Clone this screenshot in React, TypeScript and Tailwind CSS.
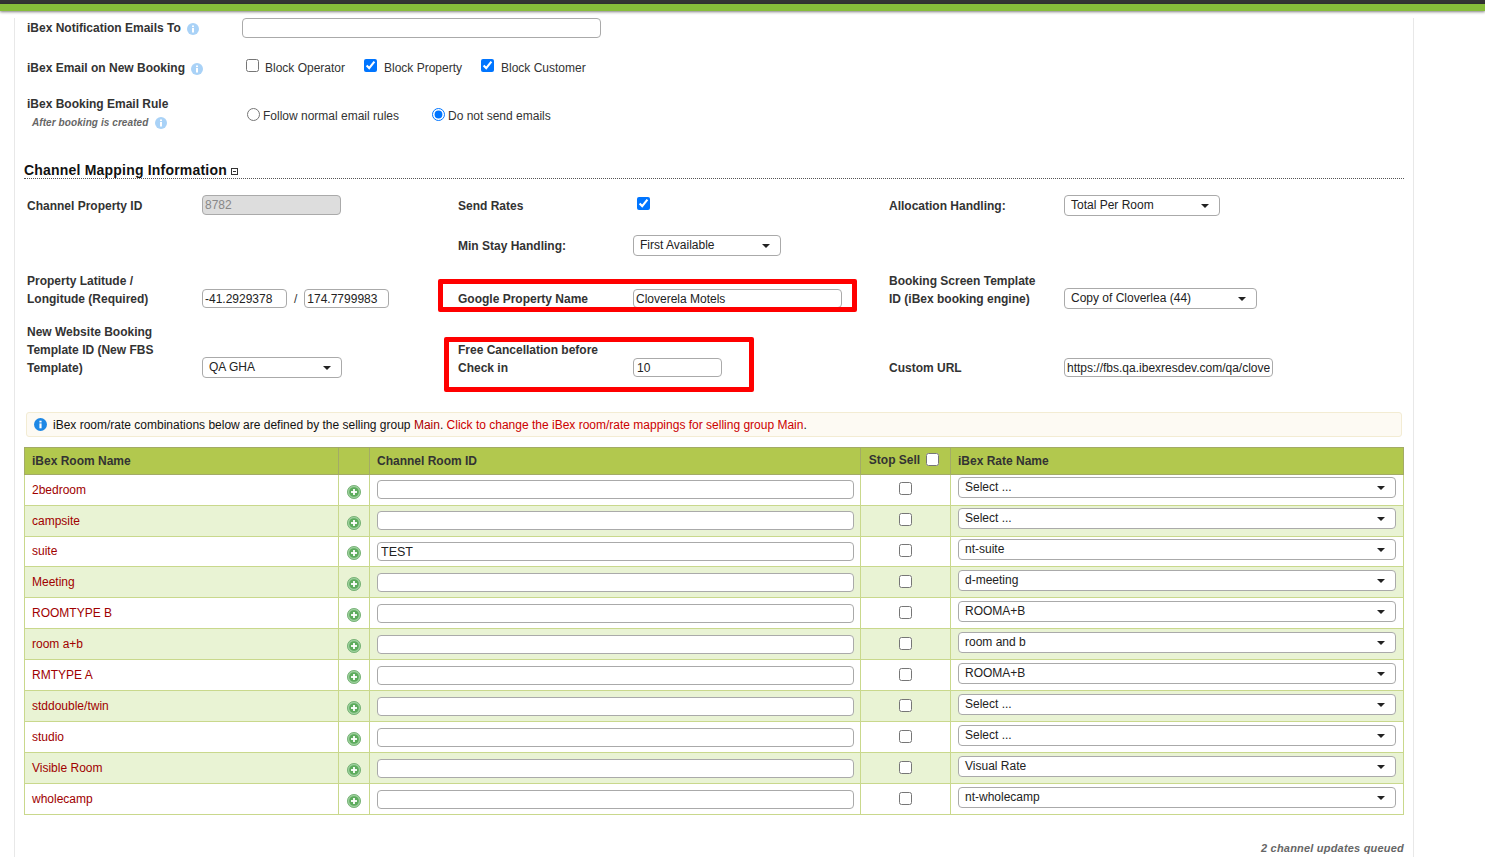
import React from "react";

const rooms = [
  { name: "2bedroom", id: "", rate: "Select ...", h: "h-[31px]" },
  { name: "campsite", id: "", rate: "Select ...", h: "h-[31px]" },
  { name: "suite", id: "TEST", rate: "nt-suite", h: "h-[30px]" },
  { name: "Meeting", id: "", rate: "d-meeting", h: "h-[31px]" },
  { name: "ROOMTYPE B", id: "", rate: "ROOMA+B", h: "h-[31px]" },
  { name: "room a+b", id: "", rate: "room and b", h: "h-[31px]" },
  { name: "RMTYPE A", id: "", rate: "ROOMA+B", h: "h-[31px]" },
  { name: "stddouble/twin", id: "", rate: "Select ...", h: "h-[31px]" },
  { name: "studio", id: "", rate: "Select ...", h: "h-[31px]" },
  { name: "Visible Room", id: "", rate: "Visual Rate", h: "h-[31px]" },
  { name: "wholecamp", id: "", rate: "nt-wholecamp", h: "h-[31px]" },
];

const InfoDot = ({ className = "" }: { className?: string }) => (
  <svg viewBox="0 0 12 12" className={`inline-block w-[12px] h-[12px] ${className}`}>
    <circle cx="6" cy="6" r="6" fill="#a9d2f7" />
    <rect x="5" y="5" width="2" height="4.5" fill="#fff" />
    <rect x="5" y="2.5" width="2" height="1.6" fill="#fff" />
  </svg>
);

const PlusIcon = () => (
  <svg viewBox="0 0 14 14" className="w-[14px] h-[14px] block">
    <circle cx="7" cy="7" r="6.6" fill="#9ccf9c" stroke="#6aa96a" strokeWidth="0.8" />
    <circle cx="7" cy="7" r="4.8" fill="#5cab5c" />
    <rect x="6.1" y="4" width="1.8" height="6" fill="#fff" />
    <rect x="4" y="6.1" width="6" height="1.8" fill="#fff" />
  </svg>
);

const Select = ({ value, className = "" }: { value: string; className?: string }) => (
  <div className={`flex items-center justify-between h-[21px] bg-white border border-[#aaa] rounded-[4px] pl-[6px] pr-[10px] text-[12px] text-[#222] ${className}`}>
    <span className="-mt-[2px]">{value}</span>
    <span className="w-0 h-0 border-x-[4px] border-x-transparent border-t-[4px] border-t-[#222]" />
  </div>
);

const TextBox = ({ value = "", className = "" }: { value?: string; className?: string }) => (
  <input
    readOnly
    value={value}
    className={`block h-[19px] bg-white border border-[#aaa] rounded-[4px] px-[3px] text-[12px] text-[#222] outline-none ${className}`}
  />
);

const Label = ({ children, className = "" }: { children: React.ReactNode; className?: string }) => (
  <div className={`font-bold text-[12px] leading-[18px] text-[#333] ${className}`}>{children}</div>
);

export default function App() {
  return (
    <div className="h-[857px] overflow-hidden bg-white text-[12px] text-[#333] font-['Liberation_Sans',Arial,sans-serif]">
      <div className="h-[4px] bg-[#333]" />
      <div className="h-[7px] bg-[#86bc3a] shadow-[0_1px_3px_rgba(0,0,0,0.5)] relative" />

      <div className="ml-[14px] w-[1400px] h-[846px] border-x border-[#e8e8e8] pl-[9px] pr-[9px]">
        {/* email settings */}
        <div className="flex items-center h-[20px] mt-[7px] pl-[3px]">
          <Label className="w-[215px]">
            iBex Notification Emails To <InfoDot className="ml-[3px] align-[-3px]" />
          </Label>
          <TextBox className="w-[359px] !h-[20px]" />
        </div>

        <div className="flex items-center h-[20px] mt-[20px] pl-[3px]">
          <Label className="w-[219px]">
            iBex Email on New Booking <InfoDot className="ml-[3px] align-[-3px]" />
          </Label>
          <label className="flex items-center w-[118px] -mt-[4px]">
            <input type="checkbox" readOnly className="m-0 relative -top-px" />
            <span className="ml-[6px] mt-[4px]">Block Operator</span>
          </label>
          <label className="flex items-center w-[117px] -mt-[4px]">
            <input type="checkbox" readOnly checked className="m-0 relative -top-px" />
            <span className="ml-[7px] mt-[4px]">Block Property</span>
          </label>
          <label className="flex items-center -mt-[4px]">
            <input type="checkbox" readOnly checked className="m-0 relative -top-px" />
            <span className="ml-[7px] mt-[4px]">Block Customer</span>
          </label>
        </div>

        <div className="flex items-center h-[36px] mt-[17px] pl-[3px]">
          <div className="w-[220px]">
            <Label>iBex Booking Email Rule</Label>
            <div className="pl-[5px] mt-px text-[10px] leading-[18px] font-bold italic text-[#666] tracking-[0.08px]">
              After booking is created <InfoDot className="ml-[4px] align-[-3px]" />
            </div>
          </div>
          <label className="flex items-center w-[185px] mt-[3px]">
            <input type="radio" name="rule" readOnly className="m-0" />
            <span className="ml-[3px] mt-[2px]">Follow normal email rules</span>
          </label>
          <label className="flex items-center mt-[3px]">
            <input type="radio" name="rule" readOnly checked className="m-0" />
            <span className="ml-[3px] mt-[2px]">Do not send emails</span>
          </label>
        </div>

        {/* channel mapping */}
        <div className="flex items-center mt-[31px] h-[17px] border-b border-dotted border-[#555] text-[14px] font-bold text-[#111] tracking-[0.2px]">
          Channel Mapping Information
          <span className="ml-[4px] mt-[2px] flex items-center justify-center w-[7px] h-[7px] border border-[#333]">
            <span className="w-[3px] h-px bg-[#333]" />
          </span>
        </div>

        <div className="grid grid-cols-[175px_256px_175px_256px_175px_1fr] grid-rows-[25px_21px_37px_55px] gap-y-[15px] pl-[3px] mt-[16px] [&>*]:min-w-0">
          <Label className="mt-[2px]">Channel Property ID</Label>
          <div><TextBox value="8782" className="w-[139px] !h-[20px] !px-[2px] !bg-[#ddd] !text-[#888]" /></div>
          <Label className="mt-[2px]">Send Rates</Label>
          <div><input type="checkbox" readOnly checked className="m-0 ml-[4px] mt-[2px] block" /></div>
          <Label className="mt-[2px]">Allocation Handling:</Label>
          <div><Select value="Total Per Room" className="w-[156px]" /></div>

          <div />
          <div />
          <Label className="self-center">Min Stay Handling:</Label>
          <div><Select value="First Available" className="w-[148px]" /></div>
          <div />
          <div />

          <Label className="self-end">Property Latitude /<br />Longitude (Required)</Label>
          <div className="flex items-end">
            <TextBox value="-41.2929378" className="w-[85px] !px-[2px]" />
            <span className="mx-[7px]">/</span>
            <TextBox value="174.7799983" className="w-[85px] !px-[2px]" />
          </div>
          <Label className="self-end">Google Property Name</Label>
          <div className="relative flex items-end">
            <TextBox value="Cloverela Motels" className="w-[209px] !px-[2px]" />
            <div className="absolute left-[-195px] top-[8px] w-[419px] h-[33px] border-[5px] border-[#f00] rounded-[2px] pointer-events-none" />
          </div>
          <Label className="self-end">Booking Screen Template<br />ID (iBex booking engine)</Label>
          <div className="flex items-end"><Select value="Copy of Cloverlea (44)" className="w-[193px] -mb-px" /></div>

          <Label className="self-end pb-px">New Website Booking<br />Template ID (New FBS<br />Template)</Label>
          <div className="flex items-end"><Select value="QA GHA" className="w-[140px]" /></div>
          <Label className="self-end pb-px">Free Cancellation before<br />Check in</Label>
          <div className="relative flex items-end">
            <TextBox value="10" className="w-[89px] mb-px" />
            <div className="absolute left-[-189px] top-[14px] w-[310px] h-[55px] border-[5px] border-[#f00] rounded-[2px] pointer-events-none" />
          </div>
          <Label className="self-end pb-px">Custom URL</Label>
          <div className="flex items-end">
            <TextBox value="https://fbs.qa.ibexresdev.com/qa/cloverlea" className="w-[209px] mb-px !px-[2px]" />
          </div>
        </div>

        {/* selling group notice */}
        <div className="flex items-center h-[25px] mt-[34px] ml-[2px] mr-[2px] bg-[#fdfaf3] border border-[#f3ecd3] rounded-[3px] pl-[7px]">
          <svg viewBox="0 0 12 12" className="w-[13px] h-[13px]">
            <circle cx="6" cy="6" r="6" fill="#1e88e5" />
            <rect x="5" y="5" width="2" height="4.5" fill="#fff" />
            <rect x="5" y="2.5" width="2" height="1.6" fill="#fff" />
          </svg>
          <span className="ml-[6px] text-[#111]">
            iBex room/rate combinations below are defined by the selling group{" "}
            <a className="text-[#a00]">Main</a>.{" "}
            <a className="text-[#c00]">Click to change the iBex room/rate mappings for selling group Main</a>.
          </span>
        </div>

        {/* room mapping table */}
        <table className="mt-[10px] ml-0 w-[1380px] table-fixed border-collapse">
          <colgroup>
            <col className="w-[314px]" />
            <col className="w-[31px]" />
            <col className="w-[491px]" />
            <col className="w-[90px]" />
            <col />
          </colgroup>
          <thead>
            <tr className="h-[27px] bg-[#b2c84e] text-[12px] text-[#333]">
              <th className="border border-[#a3ab66] pl-[7px] text-left font-bold">iBex Room Name</th>
              <th className="border border-[#a3ab66]" />
              <th className="border border-[#a3ab66] pl-[7px] text-left font-bold">Channel Room ID</th>
              <th className="border border-[#a3ab66] font-bold">
                <div className="flex items-center justify-center -mt-[3px] -ml-[3px]">
                  Stop Sell
                  <input type="checkbox" readOnly className="m-0 ml-[6px]" />
                </div>
              </th>
              <th className="border border-[#a3ab66] pl-[7px] text-left font-bold">iBex Rate Name</th>
            </tr>
          </thead>
          <tbody>
            {rooms.map((room, i) => (
              <tr key={room.name} className={`${room.h} ${i % 2 === 1 ? "bg-[#e9f3d4]" : "bg-white"}`}>
                <td className="border border-[#c9d88c] pl-[7px] text-[#a00000] align-middle">
                  <span className={i === 2 ? "relative -top-px" : ""}>{room.name}</span>
                </td>
                <td className="border border-[#c9d88c] pl-[8px]">
                  <div className="mt-[3px]"><PlusIcon /></div>
                </td>
                <td className={`border border-[#c9d88c] pl-[7px] pr-[6px] align-top ${i > 2 ? "pt-[6px]" : "pt-[5px]"}`}>
                  <TextBox value={room.id} className="w-full !text-[12.5px]" />
                </td>
                <td className={`border border-[#c9d88c] text-center align-top ${i > 2 ? "pt-[8px]" : "pt-[7px]"}`}>
                  <input type="checkbox" readOnly className="m-0 align-top" />
                </td>
                <td className={`border border-[#c9d88c] pl-[7px] pr-[7px] align-top ${i > 2 ? "pt-[3px]" : "pt-[2px]"}`}>
                  <Select value={room.rate} className="w-full" />
                </td>
              </tr>
            ))}
          </tbody>
        </table>

        <div className="mt-[25px] text-right text-[11px] font-bold italic text-[#666] tracking-[0.2px]">2 channel updates queued</div>
      </div>
    </div>
  );
}
